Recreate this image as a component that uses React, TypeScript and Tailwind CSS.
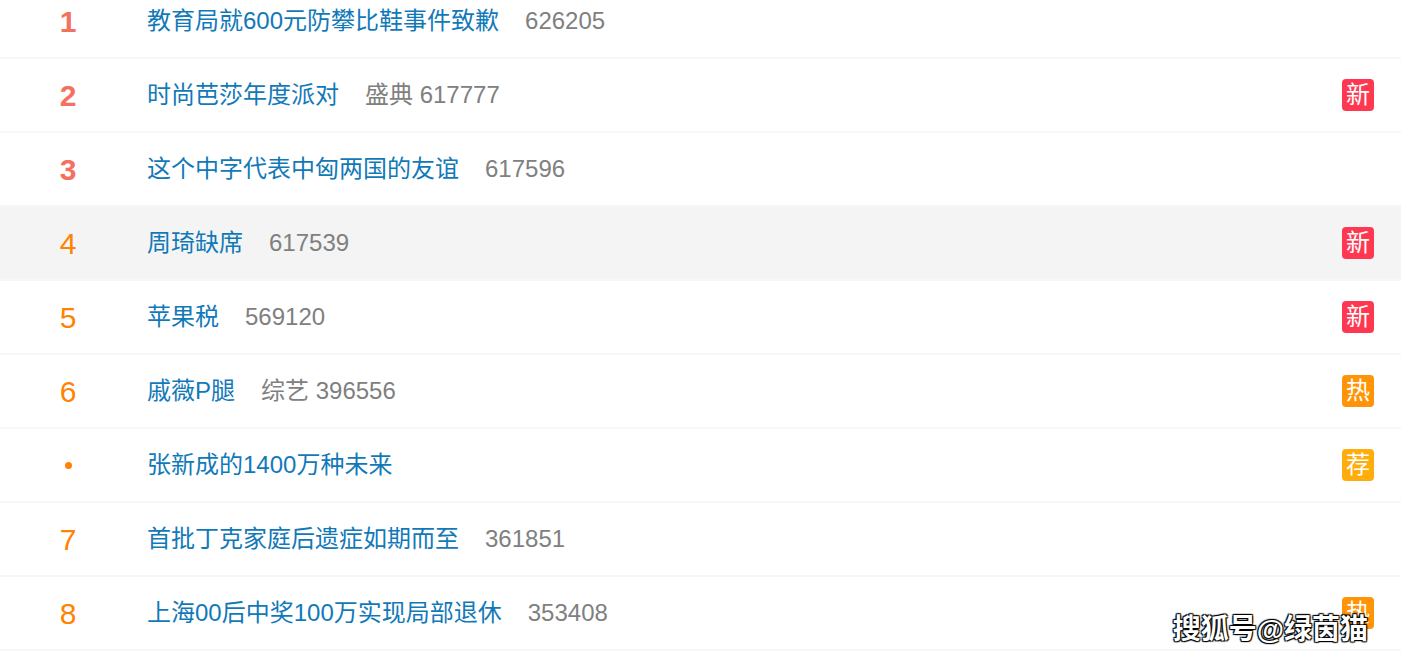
const rows = [
  { rank: "1", title: "教育局就600元防攀比鞋事件致歉", tag: "", count: "626205", badge: "" },
  { rank: "2", title: "时尚芭莎年度派对", tag: "盛典", count: "617777", badge: "新" },
  { rank: "3", title: "这个中字代表中匈两国的友谊", tag: "", count: "617596", badge: "" },
  { rank: "4", title: "周琦缺席", tag: "", count: "617539", badge: "新" },
  { rank: "5", title: "苹果税", tag: "", count: "569120", badge: "新" },
  { rank: "6", title: "戚薇P腿", tag: "综艺", count: "396556", badge: "热" },
  { rank: "•", title: "张新成的1400万种未来", tag: "", count: "", badge: "荐" },
  { rank: "7", title: "首批丁克家庭后遗症如期而至", tag: "", count: "361851", badge: "" },
  { rank: "8", title: "上海00后中奖100万实现局部退休", tag: "", count: "353408", badge: "热" },
];

const badgeColor: Record<string, string> = {
  新: "bg-[#ff3852]",
  热: "bg-[#ff9406]",
  荐: "bg-[#ffad0c]",
};

export default function App() {
  return (
    <div
      className="relative w-[1401px] h-[667px] overflow-hidden bg-white"
      style={{ fontFamily: '"Liberation Sans", "Noto Sans CJK SC", sans-serif' }}
    >
      <div className="-mt-[15px] flex flex-col">
        {rows.map((r, i) => {
          const top = i < 3;
          return (
            <div
              key={i}
              className={`flex items-center h-[74px] border-b-2 border-[#f7f7f7] ${
                i === 3 ? "bg-[#f4f4f4]" : ""
              }`}
            >
              <div
                className={`w-[136px] flex justify-center ${
                  top
                    ? "text-[30px] font-bold text-[#f4705f]"
                    : "text-[30px] text-[#ff8200]"
                }`}
              >
                {r.rank === "•" ? (
                  <span className="block w-[7px] h-[7px] rounded-full bg-[#ff8200]" />
                ) : (
                  r.rank
                )}
              </div>
              <div className="ml-[11px] flex-1 flex items-center text-[24px]">
                <span className="text-[#1279b9]">{r.title}</span>
                {(r.tag || r.count) && (
                  <span className="ml-[26px] text-[#808080]">
                    {r.tag ? `${r.tag} ` : ""}
                    {r.count}
                  </span>
                )}
              </div>
              {r.badge && (
                <div
                  className={`mr-[27px] w-8 h-8 rounded-[4px] flex items-center justify-center text-white text-[24px] leading-none ${
                    badgeColor[r.badge]
                  }`}
                >
                  {r.badge}
                </div>
              )}
            </div>
          );
        })}
      </div>

      {/* watermark overlaps the last badge, as in the source */}
      <div
        className="absolute right-[33px] top-[616px] text-[28px] font-bold text-white leading-none"
        style={{ textShadow: "1px 1px 1px #000, -1px -1px 1px #000, 1px -1px 1px #000, -1px 1px 1px #000" }}
      >
        搜狐号@绿茵猫
      </div>
    </div>
  );
}
